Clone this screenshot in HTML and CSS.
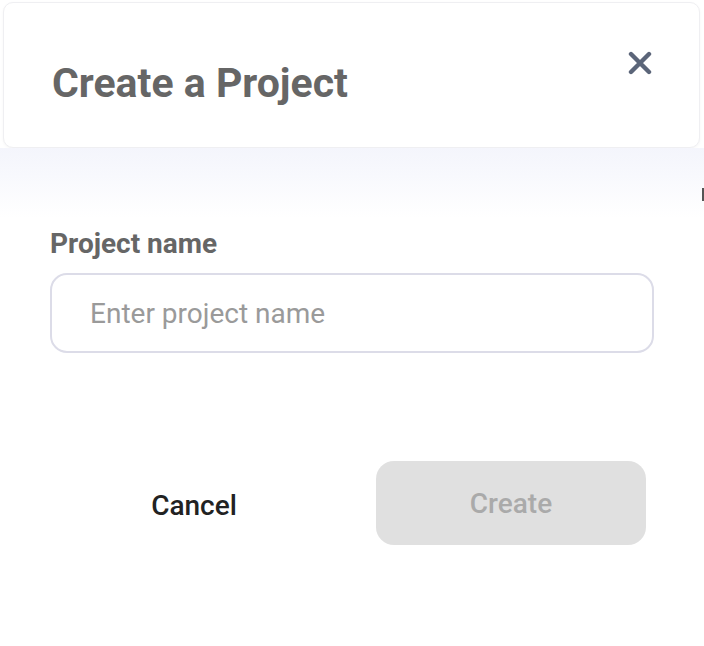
FILE: index.html
```html
<!DOCTYPE html>
<html>
<head>
<meta charset="utf-8">
<link rel="stylesheet" href="styles.css">
</head>
<body>
<div class="dialog">
  <div class="header">
    <h1 class="title">Create a Project</h1>
    <button class="close" aria-label="Close">
      <svg width="24" height="24" viewBox="0 0 24 24"><path d="M3 3 L21 21 M21 3 L3 21" stroke="#5b6579" stroke-width="4.4" stroke-linecap="round"/></svg>
    </button>
  </div>
  <div class="fade"><span class="edge-mark"></span></div>
  <div class="body">
    <label class="label">Project name</label>
    <input class="input" type="text" placeholder="Enter project name">
  </div>
  <div class="actions">
    <button class="btn cancel">Cancel</button>
    <button class="btn create" disabled>Create</button>
  </div>
</div>
</body>
</html>
```

FILE: styles.css
```css
* { box-sizing: border-box; }
html, body { margin: 0; padding: 0; background: #fff; }
body { font-family: Roboto, "Noto Sans", sans-serif; width: 704px; height: 646px; overflow: hidden; }

.dialog { display: flex; flex-direction: column; }

.header {
  margin: 2px 4px 0 3px;
  height: 146px;
  background: #fff;
  border: 1px solid #efeff2;
  border-radius: 10px;
  box-shadow: 0 1px 3px rgba(0,0,0,0.04);
  display: flex;
  justify-content: space-between;
  align-items: flex-start;
  padding: 0 47px 0 48px;
}
.title {
  margin: 56px 0 0 0;
  font-size: 41px;
  font-weight: 700;
  color: #666;
  line-height: 48px;
}
.close {
  margin-top: 48px;
  border: 0; background: none; padding: 0;
  width: 24px; height: 24px;
  display: flex;
}

.fade {
  height: 70px;
  background: linear-gradient(to bottom, #f4f5fc 0%, #f8f9fd 40%, #ffffff 100%);
  position: relative;
}
.edge-mark {
  position: absolute;
  right: 0;
  top: 40px;
  width: 2px;
  height: 13px;
  background: #555;
}

.body {
  padding: 12px 50px 0 50px;
  display: flex;
  flex-direction: column;
}
.label {
  font-size: 28px;
  font-weight: 700;
  color: #666;
  line-height: 28px;
}
.input {
  margin-top: 15px;
  width: 604px;
  height: 80px;
  border: 2px solid #dcdce8;
  border-radius: 17px;
  padding: 0 0 0 38px;
  font-family: inherit;
  font-size: 28px;
  color: #333;
  outline: none;
}
.input::placeholder { color: #9a9a9a; }

.actions {
  margin-top: 108px;
  display: flex;
  padding-left: 60px;
  align-items: center;
}
.btn {
  font-family: inherit;
  font-size: 28px;
  font-weight: 500;
  border: 0;
  background: none;
  padding: 0;
}
.cancel {
  width: 268px;
  height: 84px;
  padding-top: 4px;
  color: #222;
}
.create {
  margin-left: 48px;
  width: 270px;
  height: 84px;
  border-radius: 18px;
  background: #e0e0e0;
  color: #aaa;
}
```
